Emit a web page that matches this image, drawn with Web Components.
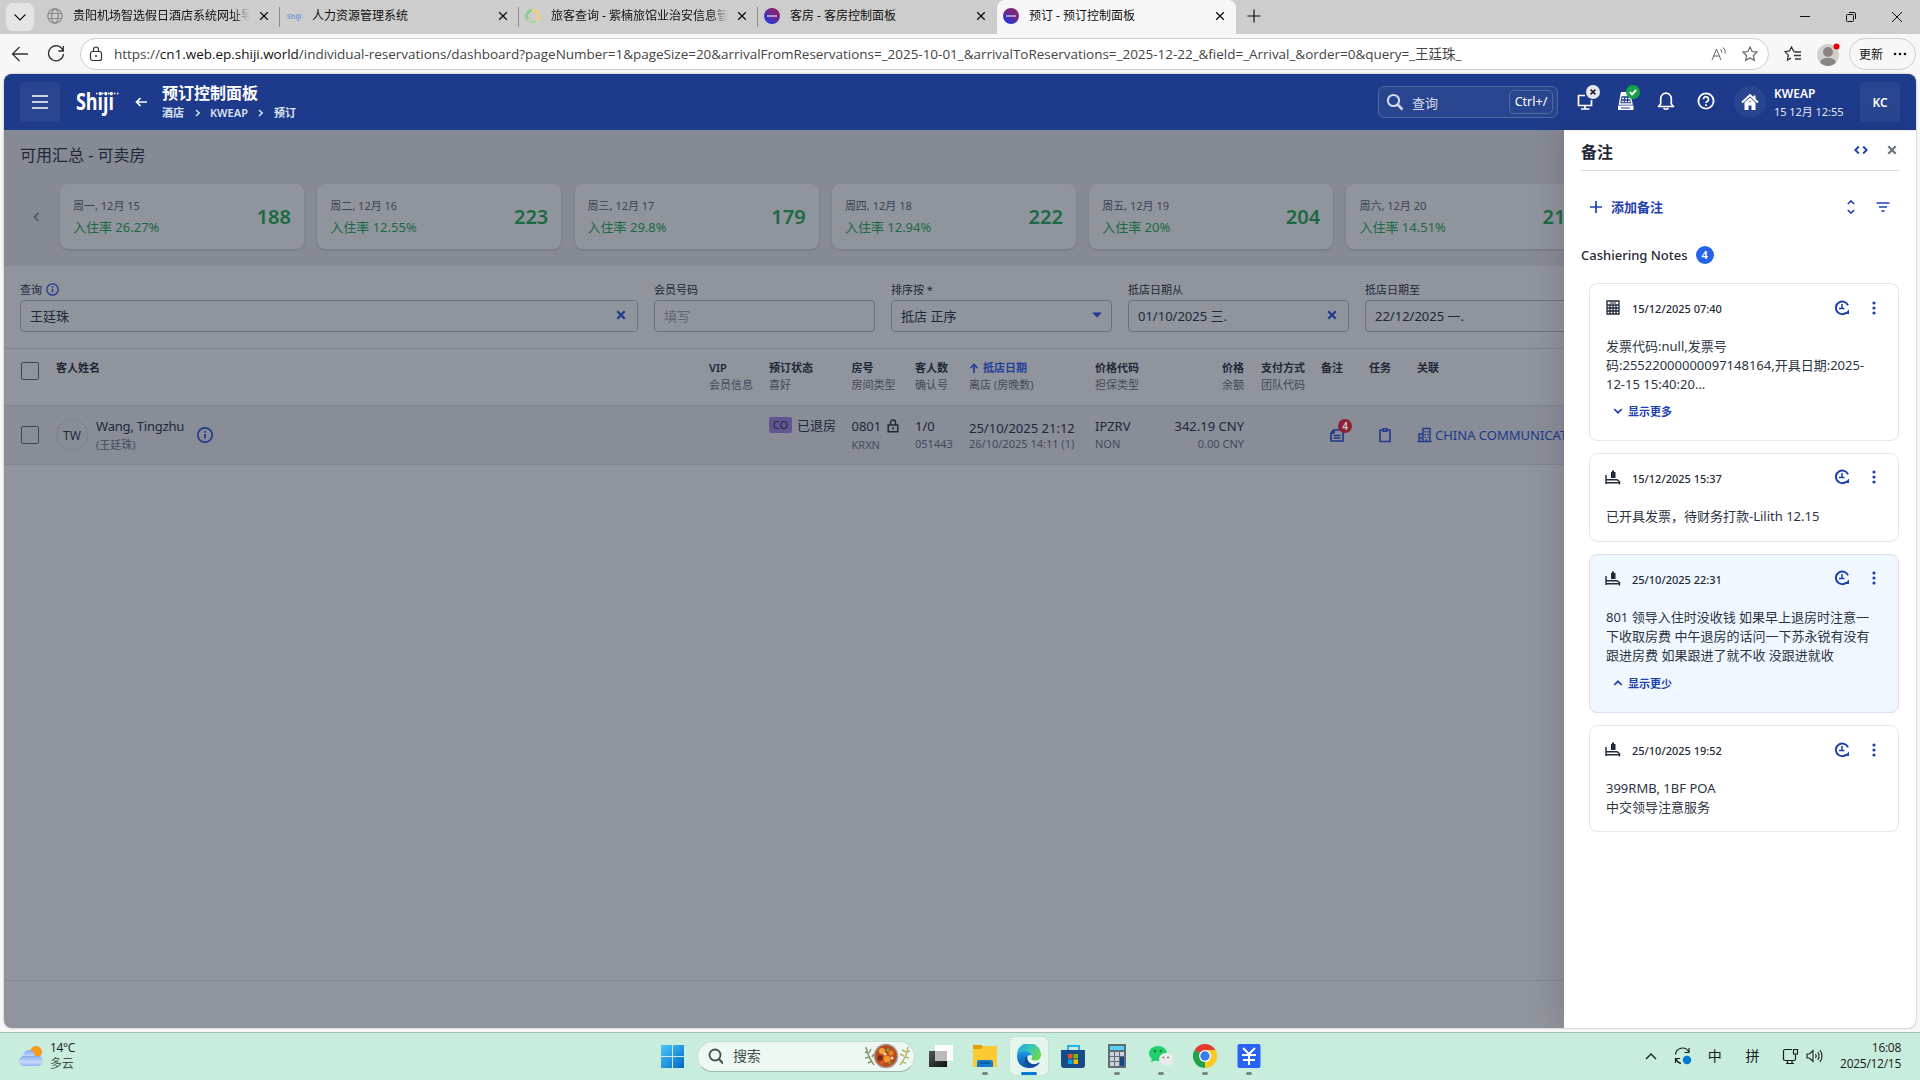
<!DOCTYPE html>
<html lang="zh-CN">
<head>
<meta charset="utf-8">
<title>预订 - 预订控制面板</title>
<style>
    html, body {
        margin: 0;
        height: 100%;
        overflow: hidden;
    }
    body {
        width: 1920px;
        height: 1080px;
        display: flex;
        flex-direction: column;
        background: #f7f7f7;
        font-family: "Noto Sans", "Noto Sans CJK SC", sans-serif;
        font-size: 13px;
        color: #1f2937;
    }
</style>
</head>
<body>
<browser-tabs>
    <browser-tab icon="globe" fade>贵阳机场智选假日酒店系统网址导航</browser-tab>
    <browser-tab icon="shiji">人力资源管理系统</browser-tab>
    <browser-tab icon="ring" fade>旅客查询 - 紫楠旅馆业治安信息管理</browser-tab>
    <browser-tab icon="app" plain>客房 - 客房控制面板</browser-tab>
    <browser-tab icon="app" active>预订 - 预订控制面板</browser-tab>
</browser-tabs>
<browser-toolbar></browser-toolbar>
<app-page>
    <app-header slot="header"></app-header>
    <availability-strip>
        <day-card date="周一, 12月 15" rate="26.27%" rooms="188"></day-card>
        <day-card date="周二, 12月 16" rate="12.55%" rooms="223"></day-card>
        <day-card date="周三, 12月 17" rate="29.8%" rooms="179"></day-card>
        <day-card date="周四, 12月 18" rate="12.94%" rooms="222"></day-card>
        <day-card date="周五, 12月 19" rate="20%" rooms="204"></day-card>
        <day-card date="周六, 12月 20" rate="14.51%" rooms="21" cut></day-card>
    </availability-strip>
    <filter-bar>
        <form-field label="查询" info icon="x" style="width:618px">王廷珠</form-field>
        <form-field label="会员号码" placeholder>填写</form-field>
        <form-field label="排序按 *" icon="caret">抵店 正序</form-field>
        <form-field label="抵店日期从" icon="x">01/10/2025 三.</form-field>
        <form-field label="抵店日期至">22/12/2025 一.</form-field>
    </filter-bar>
    <reservation-table></reservation-table>
    <notes-drawer slot="drawer">
        <note-card icon="calc" date="15/12/2025 07:40" toggle="显示更多" latin>发票代码:null,发票号<br>码:25522000000097148164,开具日期:2025-<br>12-15 15:40:20...</note-card>
        <note-card icon="bed" date="15/12/2025 15:37">已开具发票，待财务打款-Lilith 12.15</note-card>
        <note-card icon="bed" date="25/10/2025 22:31" toggle="显示更少" open>801 领导入住时没收钱 如果早上退房时注意一<br>下收取房费 中午退房的话问一下苏永锐有没有<br>跟进房费 如果跟进了就不收 没跟进就收</note-card>
        <note-card icon="bed" date="25/10/2025 19:52" latin>399RMB, 1BF POA<br>中交领导注意服务</note-card>
    </notes-drawer>
</app-page>
<task-bar></task-bar>

<script>
const svg = (w, h, body, attrs = '') =>
    `<svg width="${w}" height="${h}" viewBox="0 0 ${w} ${h}" fill="none" stroke="currentColor" ${attrs}>${body}</svg>`;

const icons = {
    chevronDown: svg(14, 14, '<path d="M1.500 4.500 7 10l5.500-5.500" stroke-width="1.200"/>'),
    globe: svg(16, 16, '<g stroke="#8a8a8a" stroke-width="1.200"><circle cx="8" cy="8" r="7.200"/><ellipse cx="8" cy="8" rx="3.300" ry="7.200"/><path d="M1.300 5.500h13.400M1.300 10.500h13.400"/></g>'),
    shiji: '<span style="font:bold 7.500px \'Open Sans\',sans-serif;color:#7c9fd6;letter-spacing:-.3px">Shiji</span>',
    ring: svg(16, 16, '<circle cx="8" cy="8" r="5.800" stroke="#f0cf83" stroke-width="3"/><path d="M3 11.500A5.800 5.800 0 0 1 7 2.200" stroke="#83cf97" stroke-width="3"/><path d="M4 12a5.800 5.800 0 0 0 7 1" stroke="#9ed8c0" stroke-width="2.500"/>'),
    app: svg(16, 16, '<defs><linearGradient id="a" x1="0" y1="1" x2=".7" y2="0"><stop stop-color="#0b3cff"/><stop offset=".6" stop-color="#6a2a90"/><stop offset="1" stop-color="#8b2468"/></linearGradient></defs><circle cx="8" cy="8" r="8" fill="url(#a)" stroke="none"/><path d="M3 8h10" stroke="#c9b8e6" stroke-width="1.500"/>'),
    tabClose: svg(10, 10, '<path d="m1.200 1.200 7.600 7.600m0-7.600L1.200 8.800" stroke-width="1.300"/>'),
    plus: svg(14, 14, '<path d="M7 .5v13M.5 7h13" stroke-width="1.200"/>'),
    x: svg(10, 10, '<path d="m1.300 1.300 7.400 7.400m0-7.400L1.300 8.700" stroke-width="2.200"/>'),
    caret: svg(10, 6, '<path d="M0 .5h10L5 5.500z" fill="currentColor" stroke="none"/>', 'style="margin-right:-2px"'),
    info: svg(18, 18, '<circle cx="9" cy="9" r="7.200" stroke-width="1.700"/><path d="M9 8v4.500M9 5v1.700" stroke-width="1.700"/>'),
    chevronRight: svg(6, 8, '<path d="m1 1 3.200 3L1 7" stroke-width="1.500"/>'),
    search: svg(18, 18, '<circle cx="7.500" cy="7.500" r="5.600" stroke-width="2"/><path d="m11.500 11.500 5 5" stroke-width="2.500"/>'),
    more: svg(4, 14, '<g fill="currentColor" stroke="none"><circle cx="2" cy="2" r="1.600"/><circle cx="2" cy="7" r="1.600"/><circle cx="2" cy="12" r="1.600"/></g>'),
    history: svg(16, 16, '<path d="M14 5.300A6.300 6.300 0 1 0 12.500 12.500" stroke-width="2"/><path d="M8 4v4.800M5 8.500h5.500" stroke-width="1.500"/><path d="m10.500 14 4.500-4.500V14z" fill="currentColor" stroke="none"/>'),
    calc: svg(14, 15, '<path d="M1 1h12v13H1zM1 5h12M1 8h12M1 11h12M4 5v9M7 5v9M10 5v9" stroke-width="1.300"/><path d="M4 3h6" stroke-width="1"/>'),
    bed: svg(16, 15, '<path d="M1 5v9M1 9.800h11L15 12M1 12.800h14M14.500 12v2.500" stroke-width="1.400"/><path d="M6 2h1V.5h2V2h1.500v6H6z" fill="currentColor" stroke="none"/>'),
    note: svg(16, 16, '<path d="M4.500 3H14v11H2V6zM2 6h3V3" stroke-width="1.700"/><path d="M4.500 8.500h7M4.500 11h7" stroke-width="1.400"/>'),
    clipboard: svg(14, 16, '<path d="M2 3h10v11.500H2z" stroke-width="1.600"/><path d="M4.500 1h5v4h-5z" fill="currentColor" stroke="none"/><path d="M6 2.800h2" stroke="#898d98"/>'),
    building: svg(15, 16, '<path d="M.5 14.500h14M2 14V7h4M6 14V1.500h7V14M4 9.500v3" stroke-width="1.400"/><path d="M8.200 4v7M10.800 4v7" stroke-width="1.500" stroke-dasharray="1.600 1.400"/><path d="M9.500 12v2" stroke-width="1.400"/>'),
    lock: svg(12, 14, '<path d="M1.200 6h9.600v6.800H1.200zM3.500 6V3.500a2.500 2.500 0 0 1 5 0V6" stroke-width="1.500"/><path d="M6 8.300v2.200" stroke-width="1.600"/>'),
};

// Small base: every element renders its own template into an open root
class UiElement extends HTMLElement {
    connectedCallback() {
        if (this.shadowRoot) return;
        this.attachShadow({ mode: 'open' });
        this.shadowRoot.innerHTML = `<style>:host{box-sizing:border-box}svg{display:block;flex:none}</style>` + this.render();
    }
    attr(name) {
        return this.getAttribute(name) || '';
    }
}

class BrowserTabs extends UiElement {
    render() {
        return `
            <style>
                :host { display: flex; height: 34px; flex: none; background: #cdcdcd; padding-left: 6px; color: #111; }
                .list { width: 28px; height: 28px; margin: 3px 7px 0 0; border-radius: 7px; background: #e4e4e4; display: grid; place-items: center; }
                .new { margin: 9px 0 0 11px; }
                .window { margin: 0 17px 0 auto; display: flex; gap: 34px; align-items: center; }
            </style>
            <div class="list">${icons.chevronDown}</div>
            <slot></slot>
            <div class="new">${icons.plus}</div>
            <div class="window">
                ${svg(12, 12, '<path d="M1 5.500h10"/>')}
                ${svg(12, 12, '<rect x="1.500" y="3.500" width="7" height="7" rx="1"/><path d="M4 1.500h5q1.500 0 1.500 1.500v5"/>')}
                ${svg(12, 12, '<path d="m1 1 10 10M11 1 1 11"/>')}
            </div>`;
    }
}

class BrowserTab extends UiElement {
    render() {
        return `
            <style>
                :host { display: flex; width: 239px; height: 34px; align-items: center; padding: 0 10px 2px 6px; border-right: 1px solid transparent; font-size: 12px; position: relative; }
                :host::after { content: ''; position: absolute; right: -1px; top: 7px; width: 1px; height: 20px; background: #8b8b8b; }
                :host([active])::after, :host([plain])::after { display: none; }
                :host([active]) { background: #f7f7f7; border-radius: 8px 8px 0 0; }
                .icon { width: 16px; display: flex; align-items: center; justify-content: center; }
                .title { flex: 1; margin: -1px 9px 0 10px; white-space: nowrap; overflow: hidden; line-height: 18px; }
                :host([fade]) .title { -webkit-mask-image: linear-gradient(90deg, #000 90%, transparent); }
            </style>
            <span class="icon">${icons[this.attr('icon')]}</span>
            <span class="title"><slot></slot></span>
            ${icons.tabClose}`;
    }
}

class BrowserToolbar extends UiElement {
    render() {
        const star = 'M8 1l2.100 4.500 4.900.6-3.600 3.400 1 4.900L8 12l-4.400 2.400 1-4.900L1 6.100l4.900-.6z';
        return `
            <style>
                :host { display: flex; align-items: center; height: 40px; flex: none; padding: 3px 4px 4px 11px; color: #333; }
                .bar { box-sizing: border-box; width: 1689px; height: 32px; margin-left: 15px; border: 1px solid #cfcfcf; border-radius: 16px; background: #fff; display: flex; align-items: center; padding: 0 10px 0 8px; }
                .url { font: 13.500px/20px "Open Sans", "Noto Sans CJK SC", sans-serif; margin-left: 11px; flex: 1; white-space: nowrap; letter-spacing: -.024px; color: #444; }
                .url b { font-weight: normal; color: #111; }
                .bar svg + svg { margin-left: 15px; }
                .fav { margin-left: 15px; }
                .face { margin-left: 14px; }
                .update { box-sizing: border-box; margin-left: auto; width: 67px; height: 32px; border: 1px solid #cfcfcf; border-radius: 16px; display: flex; align-items: center; gap: 10px; padding-left: 9px; font-size: 12px; color: #111; }
            </style>
            ${svg(18, 16, '<path d="M17 8H1.500M8.500 1 1.500 8l7 7" stroke-width="1.300"/>')}
            ${svg(18, 18, '<path d="M16 5.500A7.500 7.500 0 1 0 16.500 9M16.300 1v5h-5" stroke-width="1.300"/>', 'style="margin-left:18px"')}
            <div class="bar">
                ${svg(14, 16, '<rect x="1.500" y="5.500" width="11" height="9" rx="2" stroke-width="1.200"/><path d="M4.500 5.500V3.500a2.500 2.500 0 0 1 5 0v2" stroke-width="1.200"/><circle cx="7" cy="10" r="1" fill="currentColor" stroke="none"/>')}
                <span class="url">https://<b>cn1.web.ep.shiji.world</b>/individual-reservations/dashboard?pageNumber=1&amp;pageSize=20&amp;arrivalFromReservations=_2025-10-01_&amp;arrivalToReservations=_2025-12-22_&amp;field=_Arrival_&amp;order=0&amp;query=_王廷珠_</span>
                ${svg(16, 16, '<path d="m1 14 4.500-11L10 14M2.700 10h5.600M9.500 3q1.500 1.500 1.200 3.500M12 1.500q3 2.500 2.200 6" stroke="#666"/>')}
                ${svg(16, 16, `<path d="${star}" stroke="#666" stroke-width="1.200"/>`)}
            </div>
            ${svg(18, 16, '<path d="M11 5.500 9.500 5 7.500 1 5.500 5l-4.500.7 3.300 3.400-.8 5 3.500-2M10.500 6H17M10 9.500h7M11 13h6" stroke-width="1.300"/>', 'class="fav"')}
            ${svg(24, 24, '<g stroke="none"><circle cx="12" cy="13" r="11" fill="#d2d0ce"/><circle cx="12" cy="10" r="5" fill="#8a8583"/><path d="M4 20.500q1.500-5 8-4.500 6.500-.5 8 4.500a11 11 0 0 1-16 0" fill="#8a8583"/><circle cx="20.500" cy="4.500" r="3" fill="#e60000"/></g>', 'class="face"')}
            <div class="update">更新 ${svg(14, 4, '<g fill="currentColor" stroke="none"><circle cx="2" cy="2" r="1.300"/><circle cx="7" cy="2" r="1.300"/><circle cx="12" cy="2" r="1.300"/></g>')}</div>`;
    }
}

class AppPage extends UiElement {
    render() {
        return `
            <style>
                :host { display: flex; flex-direction: column; position: relative; width: 1912px; height: 954px; flex: none; margin-left: 4px; border-radius: 8px; overflow: hidden; background: #90949c; box-shadow: 0 0 2px #999; }
                .foot { margin-top: auto; height: 47px; border-top: 1px solid #848894; }
                .drawer { position: absolute; top: 56px; right: 0; bottom: 0; }
            </style>
            <slot name="header"></slot>
            <slot></slot>
            <div class="foot"></div>
            <div class="drawer"><slot name="drawer"></slot></div>`;
    }
}

class AppHeader extends UiElement {
    render() {
        return `
            <style>
                :host { display: flex; align-items: center; height: 56px; flex: none; background: #1e3a8a; color: #fff; padding: 0 16px 0 16px; }
                .square { width: 40px; height: 40px; border-radius: 4px; background: #29458f; display: grid; place-items: center; font-weight: 600; font-size: 12px; }
                .logo { margin-left: 16px; overflow: visible; }
                .back { margin: 0 15px 0 13px; }
                h1 { margin: 0; font-size: 16px; line-height: 20px; font-weight: 700; }
                .crumbs { display: flex; align-items: center; gap: 9.500px; font-size: 11px; line-height: 18px; font-weight: 600; color: #dbe3f5; padding-top: 1px; margin-bottom: -1px; }
                .crumbs svg { margin: 0 0 0 1px; }
                .search { box-sizing: border-box; width: 180px; height: 32px; margin-left: auto; border: 1px solid #50689f; border-radius: 6px; background: #29458f; display: flex; align-items: center; padding: 0 4px 0 7px; color: #d5dcec; }
                .search span { margin-left: 8px; flex: 1; }
                kbd { font: inherit; box-sizing: border-box; width: 44px; height: 24px; line-height: 21px; border: 1px solid #50689f; border-radius: 5px; text-align: center; color: #fff; font-size: 12.500px; }
                .tools { display: flex; gap: 16px; margin: -6px 13px 0 19px; }
                .home { width: 32px; height: 32px; border-radius: 50%; background: #29458f; display: grid; place-items: center; margin-right: 8px; }
                .hotel { width: 86px; font-size: 12px; line-height: 18px; font-weight: 600; white-space: nowrap; padding-top: 1px; }
                .hotel small { display: block; font-size: 11px; font-weight: 400; letter-spacing: -.05px; color: #e4e9f5; }
            </style>
            <div class="square">${svg(16, 14, '<path d="M0 1h16M0 7h16M0 13h16" stroke-width="1.600"/>')}</div>
            <svg class="logo" width="46" height="34" viewBox="0 0 46 34"><text x="0" y="25" fill="#fff" font-family="Open Sans, sans-serif" font-weight="700" font-size="23.500" textLength="38" lengthAdjust="spacingAndGlyphs">Shiji</text><path d="M20 8.500h23" stroke="#fff" stroke-width="1.500" stroke-dasharray="1.500 1.500"/></svg>
            <div class="back">${svg(12, 10, '<path d="M12 5H1.500M5.500 1l-4 4 4 4" stroke-width="1.700"/>')}</div>
            <div><h1>预订控制面板</h1><div class="crumbs">酒店 ${icons.chevronRight} KWEAP ${icons.chevronRight} 预订</div></div>
            <div class="search">${icons.search}<span>查询</span><kbd>Ctrl+/</kbd></div>
            <div class="tools">
                ${svg(24, 32, '<path d="M8 12.500H2q-.5 0-.5.500v9.500h13V17M8 22.500V26M4 26h8.500" stroke-width="1.700"/><circle cx="16" cy="9" r="7" fill="#e5e7eb" stroke="none"/><path d="m13.600 6.600 4.800 4.800m0-4.800-4.800 4.800" stroke="#222" stroke-width="1.600"/>')}
                ${svg(24, 32, '<path d="M4 12.500h9l2 8.500H2.500z" stroke-width="1.400"/><path d="M3.500 12.500v-2.500h6.500v2.500M1 22.500h15.500V27H1z" fill="currentColor" stroke="none"/><path d="M4 9.800h5v3" stroke-width="1.400"/><path d="M5 15.500h8M4.700 18.500h9" stroke-dasharray="2 1.100" stroke-width="1.500"/><path d="M4 25h9" stroke="#1e3a8a" stroke-width="1"/><circle cx="16" cy="9" r="7" fill="#16a34a" stroke="none"/><path d="m12.800 9 2.300 2.300 4-4.300" stroke-width="1.900"/>')}
                ${svg(24, 32, '<path d="M1.500 23.500h15L14.300 21v-5.500a5.300 5.300 0 0 0-10.600 0V21zM6.500 25q2.500 2.500 5 0" stroke-width="1.700" stroke-linejoin="round"/>')}
                ${svg(24, 32, '<circle cx="9" cy="18" r="7.600" stroke-width="1.800"/><path d="M6.500 16.200a2.500 2.500 0 1 1 4 2q-1.500.8-1.500 1.800M9 21.200v1.700" stroke-width="1.700"/>')}
            </div>
            <div class="home">${svg(18, 18, '<path d="M1 9.500 9 2l8 7.500M13.500 6V2.500" stroke-width="2"/><path d="M3.500 9.500v7.500h4v-4.500h3V17h4V9.500L9 4.500z" fill="currentColor" stroke="none"/><path d="M8.500 8.500h1" stroke="#29458f" stroke-width="1.500"/>')}</div>
            <div class="hotel">KWEAP<small>15 12月 12:55</small></div>
            <div class="square">KC</div>`;
    }
}

class AvailabilityStrip extends UiElement {
    render() {
        return `
            <style>
                :host { display: block; height: 136px; flex: none; background: #868a94; color: #202838; padding: 13px 0 0 16px; }
                h2 { margin: 0; font-size: 16px; line-height: 24px; font-weight: 400; }
                .days { display: flex; align-items: center; gap: 13.300px; margin-top: 17px; }
                .days > svg { margin: 0 6.700px 0 13px; color: #555d6c; }
            </style>
            <h2>可用汇总 - 可卖房</h2>
            <div class="days">${svg(7, 10, '<path d="M5.500.8 1.500 5l4 4.200" stroke-width="1.900"/>')}<slot></slot></div>`;
    }
}

class DayCard extends UiElement {
    render() {
        return `
            <style>
                :host { display: flex; align-items: center; width: 244px; height: 65px; flex: none; padding: 0 13px; border-radius: 8px; background: #90949c; box-shadow: 0 1px 2px rgba(60, 66, 85, .25); }
                .date { font-size: 11px; line-height: 20px; color: #3b4454; }
                .rate { font-size: 13px; line-height: 22px; color: #1b6a43; }
                b { margin: 0 0 0 auto; font-size: 20px; line-height: 28px; font-weight: 600; color: #1b6a43; }
                :host([cut]) b { margin-right: 12px; }
            </style>
            <div><div class="date">${this.attr('date')}</div><div class="rate">入住率 ${this.attr('rate')}</div></div>
            <b>${this.attr('rooms')}</b>`;
    }
}

class FilterBar extends UiElement {
    render() {
        return `
            <style>
                :host { display: flex; gap: 16px; height: 82px; flex: none; padding: 13px 0 0 16px; }
            </style>
            <slot></slot>`;
    }
}

class FormField extends UiElement {
    render() {
        const info = this.hasAttribute('info') ? `<svg width="13" height="13" viewBox="0 0 18 18" fill="none" stroke="#22398a"><circle cx="9" cy="9" r="7.800" stroke-width="1.800"/><path d="M9 8v5M9 4.500v2" stroke-width="2"/></svg>` : '';
        return `
            <style>
                :host { display: block; width: 221px; flex: none; color: #202838; }
                label { display: flex; align-items: center; gap: 4px; height: 20px; margin-bottom: 1px; font-size: 11px; }
                .box { box-sizing: border-box; height: 32px; border: 1px solid #697080; border-radius: 4px; padding: 0 11px 2px 9px; display: flex; align-items: center; justify-content: space-between; }
                .box svg { color: #1f3a8c; }
                :host([placeholder]) .box { color: #5f6675; }
            </style>
            <label>${this.attr('label')}${info}</label>
            <div class="box"><span><slot></slot></span>${icons[this.attr('icon')] || ''}</div>`;
    }
}

class ReservationTable extends UiElement {
    render() {
        const heads = [['', ''], ['客人姓名', ''], ['VIP', '会员信息'], ['预订状态', '喜好'], ['房号', '房间类型'], ['客人数', '确认号'],
            ['抵店日期', '离店 (房晚数)'], ['价格代码', '担保类型'], ['价格', '余额'], ['支付方式', '团队代码'], ['备注', ''], ['任务', ''], ['关联', '']];
        const arrow = svg(10, 10, '<path d="M5 10V1.500M1.500 5 5 1.500 8.500 5" stroke-width="1.700"/>');
        const cells = heads.slice(1).map(([top, sub], i) => {
            const cls = i === 5 ? 'sorted' : i === 7 ? 'right' : '';
            return `<div class="${cls}"><b>${i === 5 ? arrow : ''}${top}</b><small>${sub}</small></div>`;
        }).join('');
        return `
            <style>
                :host { display: block; flex: none; color: #202838; }
                .row { box-sizing: border-box; display: grid; grid-template-columns: 36px 653px 60px 82.500px 63.500px 54px 126px 66px 100px 60px 48px 48px 1fr; padding-left: 16px; border-top: 1px solid #7f8491; white-space: nowrap; }
                .head { height: 57px; padding-top: 10px; }
                .body { height: 60px; background: #898d98; border-bottom: 1px solid #7f8491; }
                .check { box-sizing: border-box; width: 18px; height: 18px; margin: 3px 0 0 1px; border: 1px solid #3e4758; border-radius: 2px; }
                .body .check { margin-top: 20px; }
                b, small { display: block; font-size: 11px; line-height: 17px; }
                b { display: flex; align-items: center; font-weight: 600; line-height: 18px; }
                b svg { margin: 0 4px 0 0; }
                small { color: #434b5b; }
                .head small { margin-top: -1px; }
                .sorted b { color: #213f9b; }
                .right { text-align: right; padding-right: 17px; }
                .right b { justify-content: flex-end; }
                .cell { padding-top: 10px; line-height: 20px; }
                .flex { display: flex; align-items: center; }
                .guest { display: flex; align-items: center; padding-bottom: 1px; }
                .avatar { box-sizing: border-box; width: 32px; height: 32px; border: 1px solid #7c8290; border-radius: 50%; text-align: center; line-height: 31px; margin-right: 8px; font-size: 12px; }
                .guest svg { margin-left: 12px; color: #20398b; }
                .guest p { margin: 0; line-height: 19px; letter-spacing: -.2px; }
                .guest small { letter-spacing: 0; }
                .tag { background: #615691; border-radius: 2px; width: 23px; height: 16px; line-height: 16px; text-align: center; font-size: 11px; margin-right: 5px; }
                .link { display: flex; align-items: center; color: #20398b; position: relative; }
                .link.ind { padding-left: 8px; }
                .count { position: absolute; left: 17px; top: 13px; width: 14px; height: 14px; border-radius: 50%; background: #8c2234; color: #c8cad0; font-size: 10px; line-height: 14px; font-weight: 600; text-align: center; }
            </style>
            <div class="row head"><div class="check"></div>${cells}</div>
            <div class="row body">
                <div class="check"></div>
                <div class="guest"><span class="avatar">TW</span><p>Wang, Tingzhu<small>(王廷珠)</small></p>${icons.info}</div>
                <div></div>
                <div class="cell"><div class="flex" style="margin-top:-1px"><span class="tag">CO</span>已退房</div></div>
                <div class="cell"><div class="flex">0801 <span style="margin-left:6px">${icons.lock}</span></div><small>KRXN</small></div>
                <div class="cell">1/0<small style="margin-top:-1px">051443</small></div>
                <div class="cell" style="padding-top:13px;line-height:19px">25/10/2025 21:12<small style="margin-top:-3px">26/10/2025 14:11 (1)</small></div>
                <div class="cell">IPZRV<small style="margin-top:-1px">NON</small></div>
                <div class="cell right">342.19 CNY<small style="margin-top:-1px">0.00 CNY</small></div>
                <div></div>
                <div class="link ind">${icons.note}<span class="count">4</span></div>
                <div class="link ind" style="padding-left:9px">${icons.clipboard}</div>
                <div class="link">${icons.building}<span style="margin-left:3px">CHINA COMMUNICAT</span></div>
            </div>`;
    }
}

class NotesDrawer extends UiElement {
    render() {
        return `
            <style>
                :host { display: block; width: 352px; height: 898px; background: #fff; border-top: 1px solid #eee; box-shadow: -8px 0 24px rgba(40, 48, 70, .15); padding: 0 17px 0 17px; }
                .top { display: flex; align-items: center; height: 40px; padding-right: 2px; padding-bottom: 1px; border-bottom: 1px solid #d9dbe0; color: #1e40af; box-sizing: border-box; }
                h2 { margin: 4px auto 0 0; font-size: 16px; line-height: 24px; font-weight: 600; color: #1f2937; }
                .add { display: flex; align-items: center; height: 28px; margin: 22px 9px 0; color: #1e40af; font-weight: 600; }
                .add span { margin: -2px auto 0 9px; }
                .group { display: flex; align-items: center; gap: 8px; height: 20px; margin: 24px 0 18px; font-weight: 500; }
                .group i { width: 18px; height: 18px; border-radius: 50%; background: #2563eb; color: #fff; font: 600 11px/18px "Noto Sans", sans-serif; text-align: center; }
                .cards { display: flex; flex-direction: column; gap: 12.200px; margin-left: 8px; }
            </style>
            <div class="top">
                <h2>备注</h2>
                ${svg(14, 8, '<path d="M4.800.5 1.300 4l3.500 3.500M9.200.5 12.700 4 9.200 7.500" stroke-width="1.900"/>')}
                <span style="color:#6b7280;margin-left:19px">${icons.x}</span>
            </div>
            <div class="add">
                ${svg(12, 12, '<path d="M6 0v12M0 6h12" stroke-width="1.700"/>')}<span>添加备注</span>
                ${svg(8, 14, '<path d="m.8 4 3.200-3L7.200 4M.8 10 4 13l3.200-3" stroke-width="1.700"/>')}
                ${svg(14, 10, '<path d="M.5 1h13M3 5h8M5.300 9h3.400" stroke-width="1.600"/>', 'style="margin-left:21px"')}
            </div>
            <div class="group">Cashiering Notes <i>4</i></div>
            <div class="cards"><slot></slot></div>`;
    }
}

class NoteCard extends UiElement {
    render() {
        const open = this.hasAttribute('open');
        const chevron = svg(10, 6, `<path d="${open ? 'M1.200 5 5 1.300 8.800 5' : 'M1.200 1 5 4.700 8.800 1'}" stroke-width="1.700"/>`);
        const toggle = this.attr('toggle');
        return `
            <style>
                :host { display: block; border: 1px solid #e5e7eb; border-radius: 8px; padding: 15px 16px 14.500px; background: #fff; }
                :host([open]) { background: #f0f7ff; border-color: #d6e0ee; }
                .meta { display: flex; align-items: center; height: 17px; font-size: 11px; font-weight: 500; }
                .icon { width: 16px; margin-left: -1px; display: flex; justify-content: center; }
                .meta time { margin: 2px auto 0 11px; }
                .meta > svg { color: #1e40af; }
                .meta > svg:last-child { margin: 0 6px 0 22px; }
                .text { margin-top: 21px; line-height: 19.200px; white-space: nowrap; color: #2b3443; }
                :host([latin]) .text { margin-bottom: -1.400px; }
                .toggle { display: flex; align-items: center; gap: 5px; padding: 10px 0 6px 7px; height: 16px; font-size: 11px; font-weight: 600; color: #1e40af; }
            </style>
            <div class="meta"><span class="icon">${icons[this.attr('icon')]}</span><time>${this.attr('date')}</time>${icons.history}${icons.more}</div>
            <div class="text"><slot></slot></div>
            ${toggle ? `<div class="toggle">${chevron}${toggle}</div>` : ''}`;
    }
}

class TaskBar extends UiElement {
    render() {
        const apps = [
            [`<defs><linearGradient id="k" x2="1" y2="1"><stop stop-color="#555"/><stop offset="1" stop-color="#111"/></linearGradient></defs><path d="M0 7h18v16H0z" fill="url(#k)"/><path d="M6 1h18v16H6z" fill="#fff"/><path d="M6 7h12v10H6z" fill="#bbb"/>`],
            [`<path d="M0 3q0-2 2-2h6l2 3H0z" fill="#d99a00"/><path d="M0 3h8l2-1h14v21H0z" fill="#fdc935"/><path d="M0 3V1h8l2 2-2 2H0z" fill="#e0a106"/><path d="M4 23v-5q0-2 2-2h12q2 0 2 2v5z" fill="#1679cb"/><path d="M7 19h10" stroke="#0b5ca8" stroke-width="2"/>`, 'dot'],
            [`<defs><linearGradient id="e" x2="1" y2=".6"><stop stop-color="#1d9be0"/><stop offset=".5" stop-color="#35c6c0"/><stop offset="1" stop-color="#68d84c"/></linearGradient><linearGradient id="f" x2="0" y2="1"><stop stop-color="#1b9de6"/><stop offset="1" stop-color="#0c4fa8"/></linearGradient></defs><path d="M0 11A12 12 0 0 1 24 11q0 5.500-6.500 5.500-3.500 0-3-2.500 1-1 .5-3-1.500-4-7-4Q2.500 7 0 11" fill="url(#e)"/><path d="M0 12Q1 7 8 7q5.500 0 7 4.500-3-1.500-4.500 1-2 5 4 7.500 4 1 7.500-1.500.8 0 .5.800Q19 24 12 24 .500 23.500 0 12" fill="url(#f)"/><path d="M10 12.500q-3 .5-2 5Q9.500 22 14 23.800q5-1 8.500-5-7 3.500-11-1Q10 15.500 10 12.500" fill="#134a9c"/>`, 'on'],
            [`<path d="M7 6V2h11v4" fill="none" stroke="#20b4e8" stroke-width="2"/><path d="M0 6h24v15q0 3-3 3H3q-3 0-3-3z" fill="#174a86"/><path d="M7 10h4.500v4.500H7z" fill="#f25022"/><path d="M12.500 10H17v4.500h-4.500z" fill="#7fba00"/><path d="M7 15.500h4.500V20H7z" fill="#00a4ef"/><path d="M12.500 15.500H17V20h-4.500z" fill="#ffb900"/>`],
            [`<rect x="3" width="18" height="24" rx="1" fill="#626b75"/><path d="M5 2h14v4H5z" fill="#56d1f5"/><path d="M5 8h4v4H5zm5 0h4v4h-4zm5 0h4v4h-4zM5 13h4v4H5zm5 0h4v4h-4zM5 18h4v4H5zm5 0h4v4h-4z" fill="#c9d2dc"/><path d="M15 13h4v9h-4z" fill="#124784"/>`, 'dot'],
            [`<ellipse cx="9" cy="9.500" rx="9" ry="7.500" fill="#20d06c"/><path d="m3 14-1 4 5-2z" fill="#20d06c"/><circle cx="6" cy="7" r="1.200" fill="#0a7a3c"/><circle cx="12" cy="7" r="1.200" fill="#0a7a3c"/><ellipse cx="17" cy="15" rx="7" ry="6" fill="#ececec"/><path d="m19 20 3.500 2-.5-4z" fill="#ececec"/><circle cx="14.500" cy="13.500" r="1" fill="#777"/><circle cx="19" cy="13.500" r="1" fill="#777"/>`, 'dot'],
            [`<path d="M12 12 1.600 6A12 12 0 0 1 22.400 6z" fill="#e33b2e"/><path d="M12 12 22.400 6A12 12 0 0 1 12 24z" fill="#fcc91f"/><path d="M12 12v12A12 12 0 0 1 1.600 6z" fill="#22a34b"/><path d="M12 6h10.400A12 12 0 0 1 12 24l5-9z" fill="#fcc91f"/><circle cx="12" cy="12" r="6" fill="#fff"/><circle cx="12" cy="12" r="4.700" fill="#3b7df0"/>`, 'dot'],
            [`<rect x=".5" width="23" height="24" rx="2" fill="#2962f6"/><path d="m6 4 6 6 6-6M5 11h14M6 16h12M12 10v11" fill="none" stroke="#fff" stroke-width="2"/>`, 'dot'],
        ];
        return `
            <style>
                :host { display: flex; align-items: center; height: 48px; flex: none; margin-top: 4px; border-top: 1px solid #a6bfb4; background: #c8eddc; color: #16201c; font: 12px/16px "Open Sans", "Noto Sans CJK SC", sans-serif; padding: 0 19px 1px 18px; letter-spacing: -.35px; }
                .weather { width: 643px; display: flex; align-items: center; gap: 6px; }
                .weather small { display: block; font-size: 12px; color: #44524c; }
                .search { box-sizing: border-box; width: 218px; height: 31px; margin: 0 7px 0 13px; border-radius: 16px; background: #edf8f3; border: 1px solid #c6dcd2; border-bottom-color: #9fb8ac; display: flex; align-items: center; padding: 0 4px 0 10px; font-size: 14px; color: #44504b; }
                .search span { flex: 1; margin-left: 10px; }
                .app { position: relative; width: 38px; height: 38px; margin-right: 6px; display: grid; place-items: center; border-radius: 5px; }
                .on { background: #e3f5ed; box-shadow: 0 0 1px #8da99c; }
                .dot::after, .on::after { content: ''; position: absolute; bottom: 0; left: 16px; width: 6px; height: 3px; border-radius: 2px; background: #74887f; }
                .on::after { left: 11px; width: 16px; background: #0078d4; }
                .tray { margin-left: auto; display: flex; align-items: center; font-size: 14px; }
                .clock { margin-left: 17px; text-align: right; font-size: 12px; letter-spacing: -.28px; }
            </style>
            <div class="weather">
                ${svg(26, 22, '<defs><linearGradient id="c" x2="0" y2="1"><stop stop-color="#86aaf0"/><stop offset=".6" stop-color="#c9daf8"/><stop offset="1" stop-color="#8fb2ee"/></linearGradient></defs><g stroke="none"><circle cx="18" cy="7" r="6" fill="#f59a1b"/><circle cx="11" cy="11" r="6" fill="url(#c)"/><rect x="1" y="11" width="24" height="10" rx="5" fill="url(#c)"/></g>')}
                <div>14°C<small>多云</small></div>
            </div>
            <svg width="23" height="23" viewBox="0 0 23 23"><defs><linearGradient id="w" x2="1" y2="1"><stop stop-color="#4cc8fb"/><stop offset="1" stop-color="#0067c8"/></linearGradient></defs><path d="M0 0h11v11H0zM12 0h11v11H12zM0 12h11v11H0zM12 12h11v11H12z" fill="url(#w)"/></svg>
            <div class="search">
                ${svg(15, 17, '<circle cx="7" cy="7" r="5.500" stroke-width="1.800"/><path d="m11 11 4 4.500" stroke-width="2"/>')}
                <span>搜索</span>
                ${svg(46, 26, '<g stroke="#84976b" stroke-width="1.500"><path d="M2 4q2 10 8 18M4 10l-3-1M6 14l-5 1M8 18l-4 2M5 10l2-4M8 14l2-3" /><path d="M44 4q-1 9-8 18M42 9l-4-2M40 13l-4-2M43 9l3-1M41 14l4 1M38 19l4 1" stroke="#b5b56b"/></g><circle cx="22" cy="13" r="11.500" fill="#b74a20" stroke="#a9978b" stroke-width="1.500"/><g stroke="none"><circle cx="18" cy="8" r="3" fill="#f5a33b"/><circle cx="27" cy="10" r="2.500" fill="#f0842a"/><circle cx="16" cy="15" r="2.500" fill="#7e2412"/><circle cx="23" cy="16" r="3.500" fill="#f39530"/><circle cx="24" cy="7" r="1.500" fill="#7ba63d"/><circle cx="28" cy="15" r="1.500" fill="#f4ddb0"/><circle cx="18" cy="20" r="2" fill="#df5b22"/><circle cx="21" cy="11" r="1.500" fill="#fbe0a2"/><circle cx="26" cy="20" r="1.600" fill="#80912e"/></g>')}
            </div>
            ${apps.map(([body, state]) => `<div class="app ${state || ''}"><svg width="24" height="24" viewBox="0 0 24 24">${body}</svg></div>`).join('')}
            <div class="tray">
                ${svg(12, 8, '<path d="m1 7 5-5 5 5" stroke-width="1.400"/>')}
                ${svg(18, 18, '<path d="M1.500 7.500a7 7 0 0 1 13-3M15 1v4.500h-4.500M7 16.500A7 7 0 0 1 2 12M6 11.500H1.500V16" stroke-width="1.200"/><circle cx="13" cy="13" r="4.200" fill="#0078d4" stroke="none"/>', 'style="margin-left:17px"')}
                <span style="margin-left:16px">中</span><span style="margin-left:24px">拼</span>
                ${svg(17, 17, '<path d="M10 1.500H3Q1.500 1.500 1.500 3v8q0 1.500 1.500 1.500h9q1.500 0 1.500-1.500V9M5.500 12.500v3M10 12.500v3M4 15.500h8M11.500 1.500h4V6h-4zM13.500 6v4" stroke-width="1.200"/>', 'style="margin-left:23px"')}
                ${svg(17, 14, '<path d="M1 5h2.500L7 1.500v11L3.500 9H1zM9.500 5q1.300 2 0 4M11.800 3q2.500 4 0 8M14 1q4 6 0 12" stroke-width="1.100"/>', 'style="margin-left:7px"')}
                <div class="clock">16:08<br>2025/12/15</div>
            </div>`;
    }
}

customElements.define('browser-tabs', BrowserTabs);
customElements.define('browser-tab', BrowserTab);
customElements.define('browser-toolbar', BrowserToolbar);
customElements.define('app-page', AppPage);
customElements.define('app-header', AppHeader);
customElements.define('availability-strip', AvailabilityStrip);
customElements.define('day-card', DayCard);
customElements.define('filter-bar', FilterBar);
customElements.define('form-field', FormField);
customElements.define('reservation-table', ReservationTable);
customElements.define('notes-drawer', NotesDrawer);
customElements.define('note-card', NoteCard);
customElements.define('task-bar', TaskBar);
</script>
</body>
</html>
